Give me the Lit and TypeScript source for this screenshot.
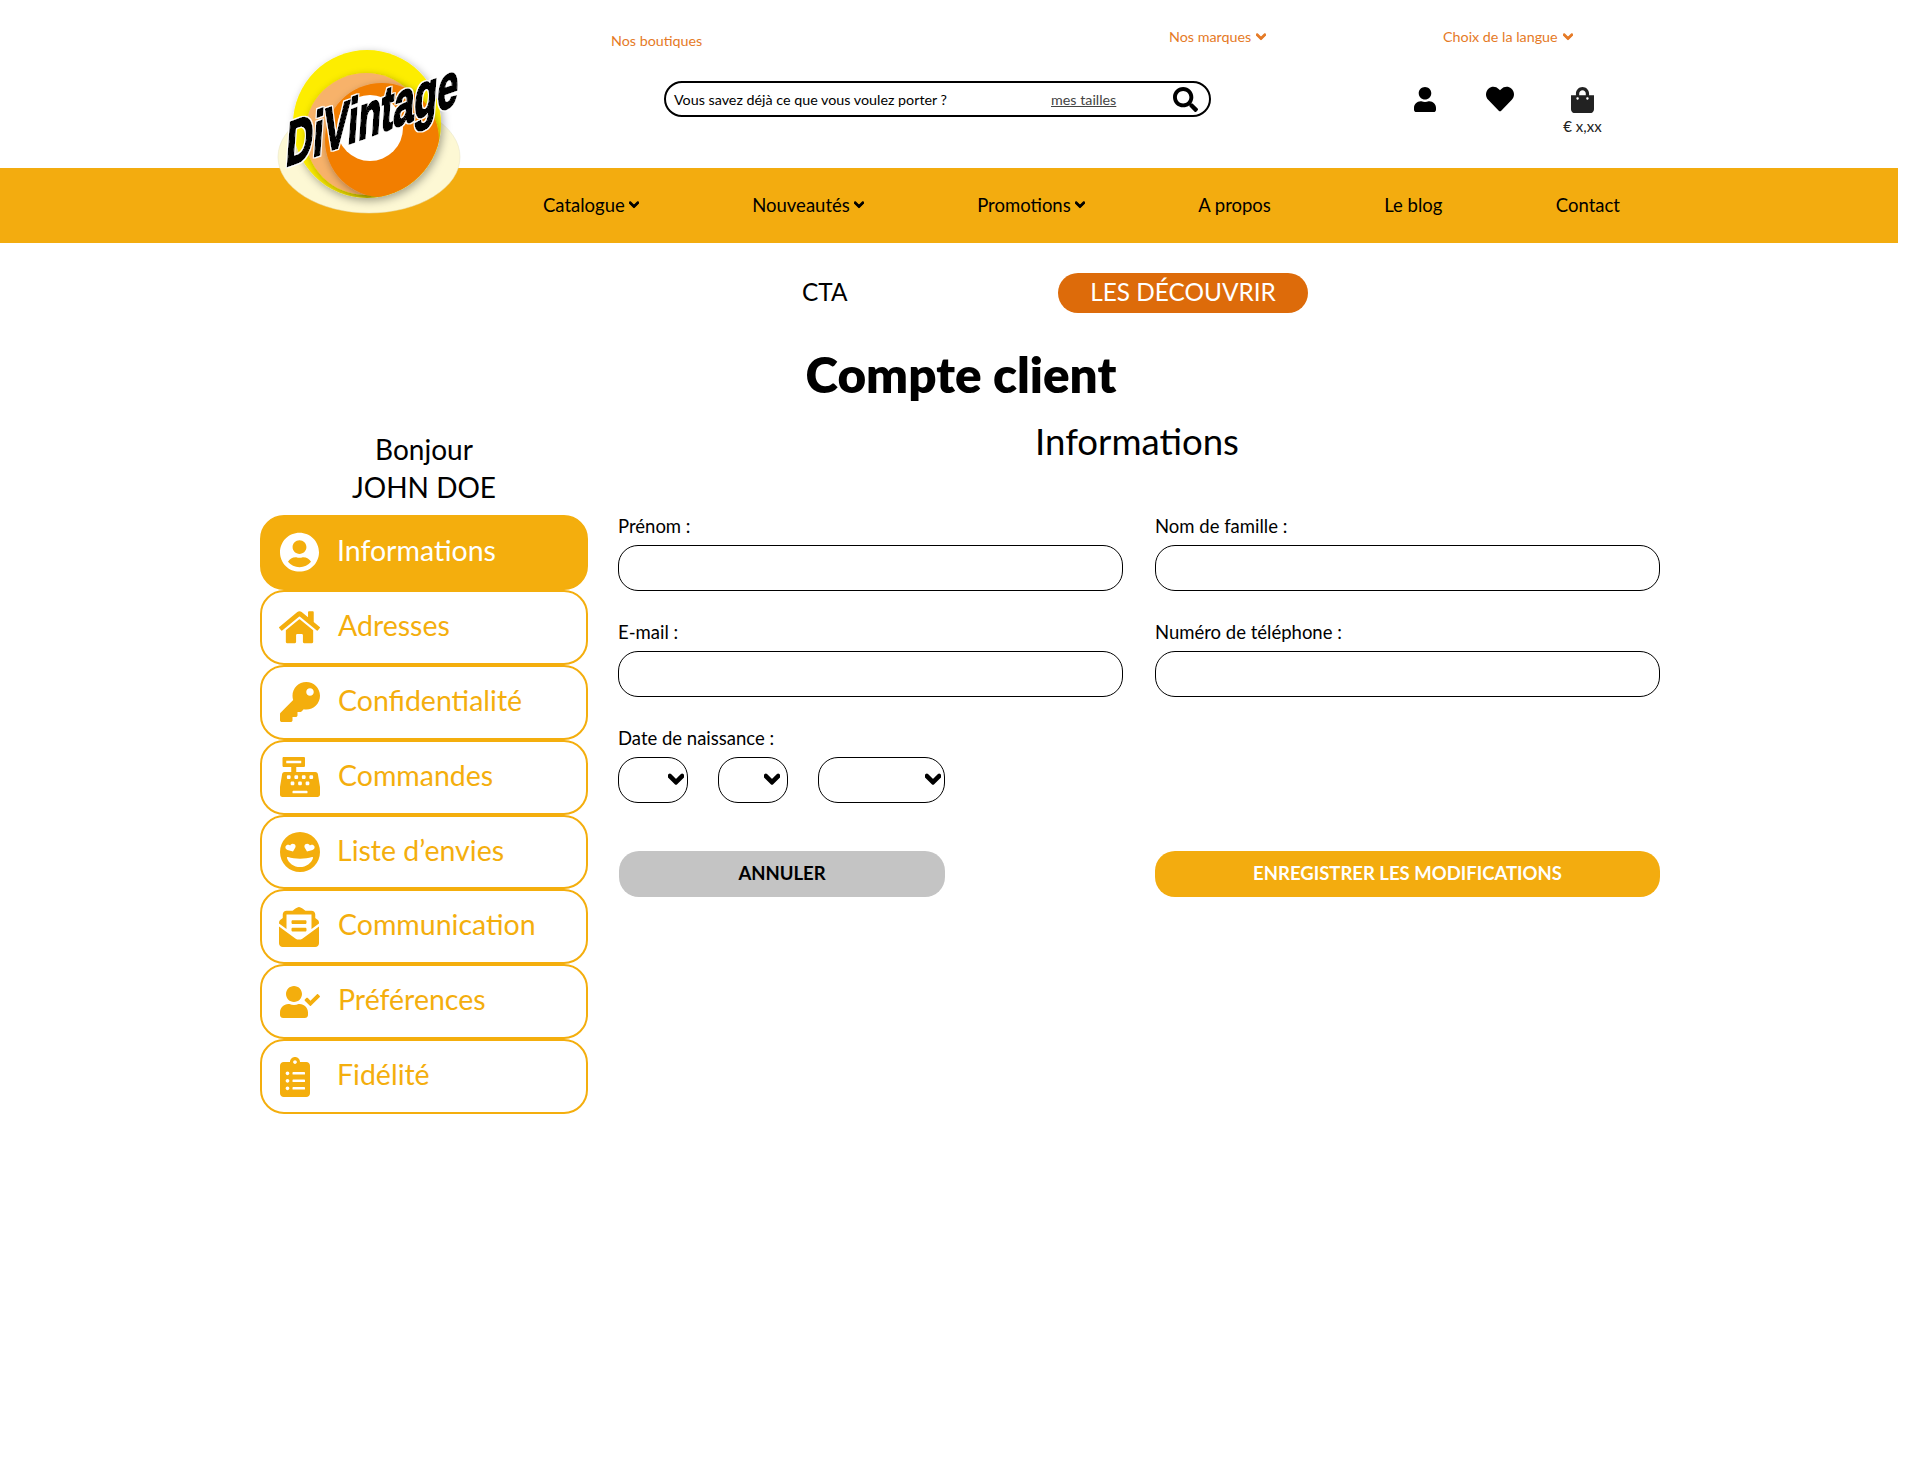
import { LitElement, html, css, svg } from 'lit';
import { customElement } from 'lit/decorators.js';

const ICONS: Record<string, [number, number, string]> = {
  chevron: [448, 512, 'M207.029 381.476L12.686 187.132c-9.373-9.373-9.373-24.569 0-33.941l22.667-22.667c9.357-9.357 24.522-9.375 33.901-.04L224 284.505l154.745-154.021c9.379-9.335 24.544-9.317 33.901.04l22.667 22.667c9.373 9.373 9.373 24.569 0 33.941L240.971 381.476c-9.373 9.372-24.569 9.372-33.942 0z'],
  search: [512, 512, 'M505 442.7L405.3 343c-4.5-4.5-10.6-7-17-7H372c27.6-35.3 44-79.7 44-128C416 93.1 322.9 0 208 0S0 93.1 0 208s93.1 208 208 208c48.3 0 92.7-16.4 128-44v16.3c0 6.4 2.5 12.5 7 17l99.7 99.7c9.4 9.4 24.6 9.4 33.9 0l28.3-28.3c9.4-9.4 9.4-24.6.1-34zM208 336c-70.7 0-128-57.2-128-128 0-70.7 57.2-128 128-128 70.7 0 128 57.2 128 128 0 70.7-57.2 128-128 128z'],
  user: [448, 512, 'M224 256c70.7 0 128-57.3 128-128S294.7 0 224 0 96 57.3 96 128s57.3 128 128 128zm89.6 32h-16.7c-22.2 10.2-46.9 16-72.9 16s-50.6-5.8-72.9-16h-16.7C60.2 288 0 348.2 0 422.4V464c0 26.5 21.5 48 48 48h352c26.5 0 48-21.5 48-48v-41.6c0-74.2-60.2-134.4-134.4-134.4z'],
  heart: [512, 512, 'M462.3 62.6C407.5 15.9 326 24.3 275.7 76.2L256 96.5l-19.7-20.3C186.1 24.3 104.5 15.9 49.7 62.6c-62.8 53.6-66.1 149.8-9.9 207.9l193.5 199.8c12.5 12.9 32.8 12.9 45.3 0l193.5-199.8c56.3-58.1 53-154.3-9.8-207.9z'],
  bag: [448, 512, 'M352 160v-32C352 57.42 294.579 0 224 0 153.42 0 96 57.42 96 128v32H0v272c0 44.183 35.817 80 80 80h288c44.183 0 80-35.817 80-80V160h-96zm-192-32c0-35.29 28.71-64 64-64s64 28.71 64 64v32H160v-32zm160 120c-13.255 0-24-10.745-24-24s10.745-24 24-24 24 10.745 24 24-10.745 24-24 24zm-192 0c-13.255 0-24-10.745-24-24s10.745-24 24-24 24 10.745 24 24-10.745 24-24 24z'],
  circleUser: [496, 512, 'M248 8C111 8 0 119 0 256s111 248 248 248 248-111 248-248S385 8 248 8zm0 96c48.6 0 88 39.4 88 88s-39.4 88-88 88-88-39.4-88-88 39.4-88 88-88zm0 344c-58.7 0-111.3-26.6-146.5-68.2 18.8-35.4 55.6-59.8 98.5-59.8 2.4 0 4.8.4 7.1 1.1 13 4.2 26.6 6.9 40.9 6.9 14.3 0 28-2.7 40.9-6.9 2.3-.7 4.7-1.1 7.1-1.1 42.9 0 79.7 24.4 98.5 59.8C359.3 421.4 306.7 448 248 448z'],
  home: [576, 512, 'M280.37 148.26L96 300.11V464a16 16 0 0 0 16 16l112.06-.29a16 16 0 0 0 15.92-16V368a16 16 0 0 1 16-16h64a16 16 0 0 1 16 16v95.64a16 16 0 0 0 16 16.05L464 480a16 16 0 0 0 16-16V300L295.67 148.26a12.19 12.19 0 0 0-15.3 0zM571.6 251.47L488 182.56V44.05a12 12 0 0 0-12-12h-56a12 12 0 0 0-12 12v72.61L318.47 43a48 48 0 0 0-61 0L4.34 251.47a12 12 0 0 0-1.6 16.9l25.5 31A12 12 0 0 0 45.15 301l235.22-193.74a12.19 12.19 0 0 1 15.3 0L530.9 301a12 12 0 0 0 16.9-1.6l25.5-31a12 12 0 0 0-1.7-16.93z'],
  key: [512, 512, 'M512 176.001C512 273.203 433.202 352 336 352c-11.22 0-22.19-1.062-32.827-3.069l-24.012 27.014A23.999 23.999 0 0 1 261.223 384H224v40c0 13.255-10.745 24-24 24h-40v40c0 13.255-10.745 24-24 24H24c-13.255 0-24-10.745-24-24v-78.059c0-6.365 2.529-12.47 7.029-16.971l161.802-161.802C163.108 213.814 160 195.271 160 176 160 78.798 238.797.001 335.999 0 433.488-.001 512 78.511 512 176.001zM336 128c0 26.51 21.49 48 48 48s48-21.49 48-48-21.49-48-48-48-48 21.49-48 48z'],
  register: [512, 512, 'M511.1 378.8l-26.7-160c-2.6-15.4-15.9-26.7-31.6-26.7H208v-64h96c8.8 0 16-7.2 16-16V16c0-8.8-7.2-16-16-16H48c-8.8 0-16 7.2-16 16v96c0 8.8 7.2 16 16 16h96v64H59.1c-15.6 0-29 11.3-31.6 26.7L.8 378.7c-.6 3.5-.9 7-.9 10.5V480c0 17.7 14.3 32 32 32h448c17.7 0 32-14.3 32-32v-90.7c.1-3.5-.2-7-.8-10.5zM280 248c0-8.8 7.2-16 16-16h16c8.8 0 16 7.2 16 16v16c0 8.8-7.2 16-16 16h-16c-8.8 0-16-7.2-16-16v-16zm-32 64h16c8.8 0 16 7.2 16 16v16c0 8.8-7.2 16-16 16h-16c-8.8 0-16-7.2-16-16v-16c0-8.8 7.2-16 16-16zm-32-80c8.8 0 16 7.2 16 16v16c0 8.8-7.2 16-16 16h-16c-8.8 0-16-7.2-16-16v-16c0-8.8 7.2-16 16-16h16zM80 80V48h192v32H80zm40 200h-16c-8.8 0-16-7.2-16-16v-16c0-8.8 7.2-16 16-16h16c8.8 0 16 7.2 16 16v16c0 8.8-7.2 16-16 16zm16 64v-16c0-8.8 7.2-16 16-16h16c8.8 0 16 7.2 16 16v16c0 8.8-7.2 16-16 16h-16c-8.8 0-16-7.2-16-16zm216 112c0 4.4-3.6 8-8 8H168c-4.4 0-8-3.6-8-8v-16c0-4.4 3.6-8 8-8h176c4.4 0 8 3.6 8 8v16zm24-112c0 8.8-7.2 16-16 16h-16c-8.8 0-16-7.2-16-16v-16c0-8.8 7.2-16 16-16h16c8.8 0 16 7.2 16 16v16zm48-80c0 8.8-7.2 16-16 16h-16c-8.8 0-16-7.2-16-16v-16c0-8.8 7.2-16 16-16h16c8.8 0 16 7.2 16 16v16z'],
  // two hearts and an open mouth cut out of a disc
  grin: [40, 40, 'M20 0a20 20 0 1 0 0 40a20 20 0 1 0 0-40zM8 25c3.5 1.2 7.5 1.7 12 1.7s8.5-.5 12-1.7c.6-.2 1.1.3 1 .9C31.8 31 26 35 20 35S8.2 31 7 25.9c-.1-.6.4-1.1 1-.9zM13 19.5l-5.5-1.5c-1.8-.6-2.5-2.3-1.9-3.7.6-1.5 2.4-2 3.8-1.2l.7.4.5-.7c1-1.3 2.8-1.5 4-.5 1.2 1 1.3 2.7.3 3.9zM27 19.5l5.5-1.5c1.8-.6 2.5-2.3 1.9-3.7-.6-1.5-2.4-2-3.8-1.2l-.7.4-.5-.7c-1-1.3-2.8-1.5-4-.5-1.2 1-1.3 2.7-.3 3.9z'],
  envelope: [512, 512, 'M176 216h160c8.84 0 16-7.16 16-16v-16c0-8.84-7.16-16-16-16H176c-8.84 0-16 7.16-16 16v16c0 8.84 7.16 16 16 16zm-16 80c0 8.84 7.16 16 16 16h160c8.84 0 16-7.16 16-16v-16c0-8.84-7.16-16-16-16H176c-8.84 0-16 7.16-16 16v16zm96 121.13c-16.42 0-32.84-5.06-46.86-15.19L0 250.86V464c0 26.51 21.49 48 48 48h416c26.51 0 48-21.49 48-48V250.86L302.86 401.94c-14.02 10.12-30.44 15.19-46.86 15.19zm237.61-254.18c-8.85-6.94-17.24-13.47-29.61-22.81V96c0-26.51-21.49-48-48-48h-77.55c-3.04-2.2-5.87-4.26-9.04-6.56C312.6 29.17 279.2-.35 256 0c-23.2-.35-56.59 29.17-73.41 41.44-3.17 2.3-6 4.36-9.04 6.56H96c-26.51 0-48 21.49-48 48v44.14c-12.37 9.33-20.76 15.87-29.61 22.81A47.995 47.995 0 0 0 0 200.72v10.65l96 69.35V96h320v184.72l96-69.35v-10.65c0-14.74-6.78-28.67-18.39-37.77z'],
  userCheck: [640, 512, 'M224 256c70.7 0 128-57.3 128-128S294.7 0 224 0 96 57.3 96 128s57.3 128 128 128zm89.6 32h-16.7c-22.2 10.2-46.9 16-72.9 16s-50.6-5.8-72.9-16h-16.7C60.2 288 0 348.2 0 422.4V464c0 26.5 21.5 48 48 48h352c26.5 0 48-21.5 48-48v-41.6c0-74.2-60.2-134.4-134.4-134.4zm323-128.4l-27.8-28.1c-4.6-4.7-12.1-4.7-16.8-.1l-104.8 104-45.5-45.8c-4.6-4.7-12.1-4.7-16.8-.1l-28.1 27.9c-4.7 4.6-4.7 12.1-.1 16.8l81.7 82.3c4.6 4.7 12.1 4.7 16.8.1l141.3-140.2c4.6-4.7 4.7-12.2.1-16.8z'],
  clipboard: [384, 512, 'M336 64h-80c0-35.3-28.7-64-64-64s-64 28.7-64 64H48C21.5 64 0 85.5 0 112v352c0 26.5 21.5 48 48 48h288c26.5 0 48-21.5 48-48V112c0-26.5-21.5-48-48-48zM96 424c-13.3 0-24-10.7-24-24s10.7-24 24-24 24 10.7 24 24-10.7 24-24 24zm0-96c-13.3 0-24-10.7-24-24s10.7-24 24-24 24 10.7 24 24-10.7 24-24 24zm0-96c-13.3 0-24-10.7-24-24s10.7-24 24-24 24 10.7 24 24-10.7 24-24 24zm96-192c13.3 0 24 10.7 24 24s-10.7 24-24 24-24-10.7-24-24 10.7-24 24-24zm128 368c0 4.4-3.6 8-8 8H168c-4.4 0-8-3.6-8-8v-16c0-4.4 3.6-8 8-8h144c4.4 0 8 3.6 8 8v16zm0-96c0 4.4-3.6 8-8 8H168c-4.4 0-8-3.6-8-8v-16c0-4.4 3.6-8 8-8h144c4.4 0 8 3.6 8 8v16zm0-96c0 4.4-3.6 8-8 8H168c-4.4 0-8-3.6-8-8v-16c0-4.4 3.6-8 8-8h144c4.4 0 8 3.6 8 8v16z'],
};

const icon = (name: string, w: number) => {
  const [vw, vh, d] = ICONS[name];
  return html`<svg class="icon i-${name}" viewBox="0 0 ${vw} ${vh}" width=${w} height=${(w * vh) / vw} fill="currentColor" aria-hidden="true">
    ${svg`<path fill-rule="evenodd" d=${d}></path>`}
  </svg>`;
};

const MENU = [
  { label: 'Informations', icon: 'circleUser', w: 39, active: true, tight: true },
  { label: 'Adresses', icon: 'home', w: 41 },
  { label: 'Confidentialité', icon: 'key', w: 40 },
  { label: 'Commandes', icon: 'register', w: 40 },
  { label: 'Liste d’envies', icon: 'grin', w: 40, tight: true },
  { label: 'Communication', icon: 'envelope', w: 40 },
  { label: 'Préférences', icon: 'userCheck', w: 40 },
  { label: 'Fidélité', icon: 'clipboard', w: 30, tight: true },
];

@customElement('app-root')
export class AppRoot extends LitElement {
  static styles = css`
    :host {
      display: block;
      position: relative;
      width: 1920px;
      min-height: 1460px;
      background: #fff;
      color: #000;
      font-family: Lato, "Open Sans", sans-serif;
    }

    .icon { display: block; flex: none; }
    .i-chevron path { stroke: currentColor; stroke-width: 46; stroke-linejoin: round; }

    /* top strip */
    .links {
      display: grid;
      grid-template-columns: 558px 274px auto;
      justify-content: start;
      height: 81px;
      padding-left: 611px;
      padding-top: 28px;
      box-sizing: border-box;
      font-size: 14.3px;
      line-height: 18px;
      color: #e57a26;
    }
    .links span { display: flex; align-items: center; gap: 5px; height: 18px; }
    .links .shops { margin-top: 4px; }

    .middle {
      display: flex;
      align-items: flex-start;
      height: 87px;
      padding-left: 664px;
    }
    .search {
      display: flex;
      align-items: center;
      width: 547px;
      height: 36px;
      box-sizing: border-box;
      border: 2px solid #000;
      border-radius: 18px;
      padding: 0 11px 0 8px;
      font-size: 14.3px;
    }
    .search .ask { width: 377px; white-space: nowrap; }
    .search .sizes { width: 122px; color: #444; text-decoration: underline; white-space: nowrap; }
    .actions {
      display: grid;
      grid-template-columns: 22px 28px 37px;
      column-gap: 50px;
      margin-left: 203px;
      padding-top: 6px;
    }
    .actions .i-heart { margin-top: -2px; }
    .actions .cart { display: flex; flex-direction: column; align-items: center; gap: 4px; font-size: 15px; line-height: 18px; color: #222; white-space: nowrap; }

    /* nav bar */
    nav {
      display: flex;
      justify-content: space-between;
      align-items: center;
      box-sizing: border-box;
      width: 1898px;
      height: 75px;
      padding: 0 278px 2px 543px;
      background: #f3ac0f;
      font-size: 18.5px;
    }
    nav a { display: flex; align-items: center; gap: 4px; }

    .promo {
      display: grid;
      grid-template-columns: 256px 250px;
      align-items: center;
      padding: 30px 0 32px 802px;
      font-size: 24.4px;
    }
    .promo span { padding-bottom: 4px; }
    .promo b {
      font-weight: 400;
      height: 40px;
      line-height: 37px;
      border-radius: 20px;
      background: #dd6b0a;
      color: #fff;
      text-align: center;
    }

    h1 {
      margin: 0;
      font-size: 49.4px;
      line-height: 58px;
      font-weight: 800;
      text-align: center;
      padding: 0 0 2px 2px;
    }

    .main { display: flex; padding-left: 260px; }

    /* account menu */
    aside { width: 328px; padding-top: 25px; }
    .hello { font-size: 28px; line-height: 38px; text-align: center; margin-bottom: 9px; }
    .row {
      display: flex;
      align-items: center;
      height: 74.9px;
      box-sizing: border-box;
      padding-left: 18px;
      border: 2px solid #f4ae0d;
      border-radius: 24px;
      color: #f4ae0d;
      font-size: 28.5px;
    }
    .row.active { background: #f4ae0d; color: #fff; }
    .row .slot { width: 58px; flex: none; }
    .row.tight .slot { width: 57px; }
    .row .text { padding-bottom: 5px; }
    .row .i-home, .row .i-envelope { margin-left: -1px; }

    /* form */
    .content { width: 1042px; margin-left: 30px; }
    h2 {
      margin: 0;
      padding: 12px 4px 49.6px 0;
      font-size: 36.6px;
      line-height: 48px;
      font-weight: 400;
      text-align: center;
    }
    form {
      display: grid;
      grid-template-columns: 505px 505px;
      column-gap: 32px;
      row-gap: 30px;
    }
    label { display: block; font-size: 18.5px; line-height: 22px; padding-bottom: 2px; margin-bottom: 6px; }
    input, select {
      display: block;
      width: 100%;
      height: 46px;
      box-sizing: border-box;
      border: 1px solid #000;
      border-radius: 20px;
      background: #fff;
      font: inherit;
    }
    .dates { display: flex; gap: 30px; }
    .pick { position: relative; }
    .pick select { appearance: none; }
    .pick .mark { position: absolute; top: 13px; pointer-events: none; }
    .buttons { grid-column: 1 / -1; display: grid; grid-template-columns: 505px 505px; column-gap: 32px; margin-top: 18px; }
    button {
      height: 46px;
      border: 0;
      border-radius: 20px;
      padding: 0 0 2px;
      font: inherit;
      font-size: 18.5px;
      font-weight: 700;
    }
    .cancel { width: 326px; margin-left: 1px; background: #c4c4c4; color: #000; }
    .save { background: #f3ac0f; color: #fff; }

    .logo { position: absolute; left: 275px; top: 45px; overflow: visible; }
    .logo text { font-family: "Liberation Sans", sans-serif; font-weight: 700; }
  `;

  private renderLogo() {
    return html`<svg class="logo" width="195" height="175" viewBox="275 45 195 175" aria-label="DiVintage">
      ${svg`
        <defs>
          <filter id="soft" x="-20%" y="-20%" width="140%" height="140%">
            <feDropShadow dx="2" dy="3" stdDeviation="4" flood-color="#000" flood-opacity=".35"></feDropShadow>
          </filter>
          <filter id="edge" x="-10%" y="-10%" width="120%" height="120%">
            <feMorphology in="SourceAlpha" operator="dilate" radius=".7" result="grown"></feMorphology>
            <feFlood flood-color="#fff"></feFlood>
            <feComposite in2="grown" operator="in"></feComposite>
            <feMerge>
              <feMergeNode></feMergeNode>
              <feMergeNode in="SourceGraphic"></feMergeNode>
            </feMerge>
          </filter>
          <clipPath id="yellow"><circle cx="367" cy="124" r="74"></circle></clipPath>
        </defs>
        <ellipse cx="369" cy="157" rx="91" ry="56" fill="#fdf8d4" stroke="#e6e2c0" stroke-width=".5"></ellipse>
        <circle cx="367" cy="124" r="74" fill="#fded00" filter="url(#soft)"></circle>
        <g clip-path="url(#yellow)">
          <circle cx="366" cy="134" r="61" fill="#f7b26a" filter="url(#soft)"></circle>
          <circle cx="382" cy="140" r="57" fill="#f27e03" filter="url(#soft)"></circle>
        </g>
        <circle cx="370" cy="128" r="33" fill="#fff"></circle>
        <g filter="url(#edge)">
          <text transform="translate(285 167) skewY(-20) skewX(-4)" font-size="62" textLength="172" lengthAdjust="spacingAndGlyphs" stroke="#000" stroke-width="2.4">DiVintage</text>
        </g>
      `}
    </svg>`;
  }

  private renderPick(width: number, right: number) {
    return html`<div class="pick" style="width:${width}px">
      <select aria-label="Date de naissance"></select>
      <div class="mark" style="right:${right}px">${icon('chevron', 16)}</div>
    </div>`;
  }

  render() {
    return html`
      <header>
        <div class="links">
          <span class="shops">Nos boutiques</span>
          <span>Nos marques ${icon('chevron', 10)}</span>
          <span>Choix de la langue ${icon('chevron', 10)}</span>
        </div>
        <div class="middle">
          <div class="search">
            <span class="ask">Vous savez déjà ce que vous voulez porter ?</span>
            <span class="sizes">mes tailles</span>
            ${icon('search', 25)}
          </div>
          <div class="actions">
            ${icon('user', 22)}
            ${icon('heart', 28)}
            <div class="cart">${icon('bag', 23)}<span>€ x,xx</span></div>
          </div>
        </div>
        <nav>
          <a>Catalogue ${icon('chevron', 10)}</a>
          <a>Nouveautés ${icon('chevron', 10)}</a>
          <a>Promotions ${icon('chevron', 10)}</a>
          <a>A propos</a>
          <a>Le blog</a>
          <a>Contact</a>
        </nav>
      </header>

      <div class="promo"><span>CTA</span><b>LES DÉCOUVRIR</b></div>
      <h1>Compte client</h1>

      <div class="main">
        <aside>
          <div class="hello">Bonjour<br />JOHN DOE</div>
          ${MENU.map(
            item => html`<div class="row ${item.active ? 'active' : ''} ${item.tight ? 'tight' : ''}">
              <div class="slot">${icon(item.icon, item.w)}</div>
              <span class="text">${item.label}</span>
            </div>`
          )}
        </aside>

        <section class="content">
          <h2>Informations</h2>
          <form>
            <div><label>Prénom :</label><input type="text" /></div>
            <div><label>Nom de famille :</label><input type="text" /></div>
            <div><label>E-mail :</label><input type="text" /></div>
            <div><label>Numéro de téléphone :</label><input type="text" /></div>
            <div>
              <label>Date de naissance :</label>
              <div class="dates">${this.renderPick(70, 4)}${this.renderPick(70, 8)}${this.renderPick(127, 4)}</div>
            </div>
            <div></div>
            <div class="buttons">
              <button type="button" class="cancel">ANNULER</button>
              <button type="button" class="save">ENREGISTRER LES MODIFICATIONS</button>
            </div>
          </form>
        </section>
      </div>

      ${this.renderLogo()}
    `;
  }
}
